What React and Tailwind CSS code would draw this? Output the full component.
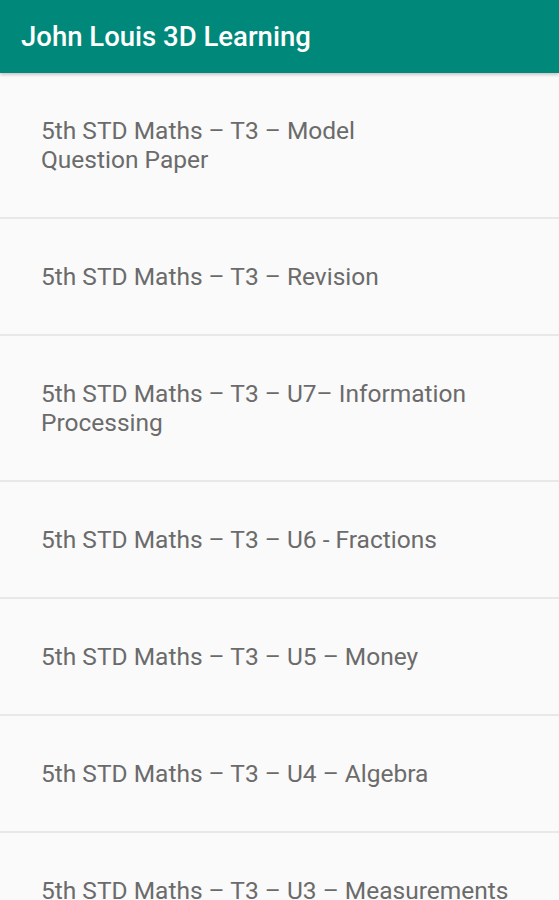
import React from "react";

const items = [
  ["5th STD Maths – T3 – Model", "Question Paper"],
  ["5th STD Maths – T3 – Revision"],
  ["5th STD Maths – T3 – U7– Information", "Processing"],
  ["5th STD Maths – T3 – U6 - Fractions"],
  ["5th STD Maths – T3 – U5 – Money"],
  ["5th STD Maths – T3 – U4 – Algebra"],
  ["5th STD Maths – T3 – U3 – Measurements"],
];

export default function App() {
  return (
    <div className="h-[900px] overflow-hidden bg-[#fafafa]" style={{ fontFamily: "Roboto, 'Noto Sans', sans-serif" }}>
      <div className="relative z-10 h-[73px] bg-[#00897b] flex items-center pl-[21px] shadow-[0_2px_3px_rgba(0,0,0,0.2)]">
        <h1 className="text-white text-[27.5px] font-medium leading-none">John Louis 3D Learning</h1>
      </div>
      <div className="flex flex-col">
        {items.map((lines, i) => (
          <div key={i} className="border-b-2 border-[#e8e8e8] pl-[41px] pr-[10px] py-[43px]">
            <p className="text-[#6b6b6b] text-[24.5px] leading-[29px] whitespace-nowrap">
              {lines.map((l, j) => (
                <React.Fragment key={j}>
                  {j > 0 && <br />}
                  {l}
                </React.Fragment>
              ))}
            </p>
          </div>
        ))}
      </div>
    </div>
  );
}
